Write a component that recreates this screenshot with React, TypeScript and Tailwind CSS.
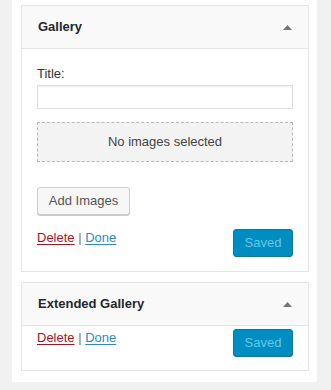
import React from 'react'

function Arrow() {
	return (
		<svg width="9" height="5" viewBox="0 0 9 5" className="block">
			<polygon points="4.5,0 9,5 0,5" fill="#72777c" />
		</svg>
	)
}

function LinksRow({ top }: { top: string }) {
	return (
		<div className={`flex items-start justify-between ${top}`}>
			<div className="text-[13px] leading-[16px] pt-[1px]">
				<a className="text-[#b0101a] underline underline-offset-2">Delete</a>
				<span className="text-[#777]"> | </span>
				<a className="text-[#2a8cc4] underline underline-offset-2">Done</a>
			</div>
			<button className="h-[28px] w-[60px] rounded-[3px] border border-[#007cb2] bg-[#008ec2] text-[13px] text-[#66c6e4]">
				Saved
			</button>
		</div>
	)
}

function Header({ title }: { title: string }) {
	return (
		<div className="flex h-[43px] items-center justify-between border-b border-[#e5e5e5] bg-[#f9f9f9] pl-[16px] pr-[16px]">
			<span className="text-[13px] font-bold text-[#23282d]">{title}</span>
			<Arrow />
		</div>
	)
}

export default function App() {
	return (
		<div
			className="h-[390px] w-[331px] bg-[#f1f1f1]"
			style={{ fontFamily: '"Liberation Sans", Arial, sans-serif' }}
		>
			<div className="ml-[12px] w-[305px] bg-white px-[9px] pb-[11px] pt-[5px]">
				{/* Gallery widget */}
				<div className="w-[288px] border border-[#e5e5e5]">
					<Header title="Gallery" />
					<div className="px-[15px] pb-[14px] pt-[16px]">
						<div className="text-[13px] leading-[18px] text-[#32373c]">Title:</div>
						<div className="mt-[2px] h-[24px] w-full border border-[#ddd] bg-white shadow-[inset_0_1px_2px_rgba(0,0,0,0.07)]" />
						<div className="mt-[13px] flex h-[40px] items-center justify-center border border-dashed border-[#b4b9be] bg-[#f3f3f3] text-[13px] text-[#444]">
							No images selected
						</div>
						<button className="mt-[25px] h-[28px] w-[93px] rounded-[3px] border border-[#ccc] bg-[#f7f7f7] text-[13px] text-[#555] shadow-[0_1px_0_#ccc]">
							Add Images
						</button>
						<LinksRow top="mt-[14px]" />
					</div>
				</div>

				{/* Extended Gallery widget */}
				<div className="mt-[10px] w-[288px] border border-[#e5e5e5]">
					<Header title="Extended Gallery" />
					<div className="px-[15px] pb-[13px] pt-[3px]">
						<LinksRow top="" />
					</div>
				</div>
			</div>
		</div>
	)
}
